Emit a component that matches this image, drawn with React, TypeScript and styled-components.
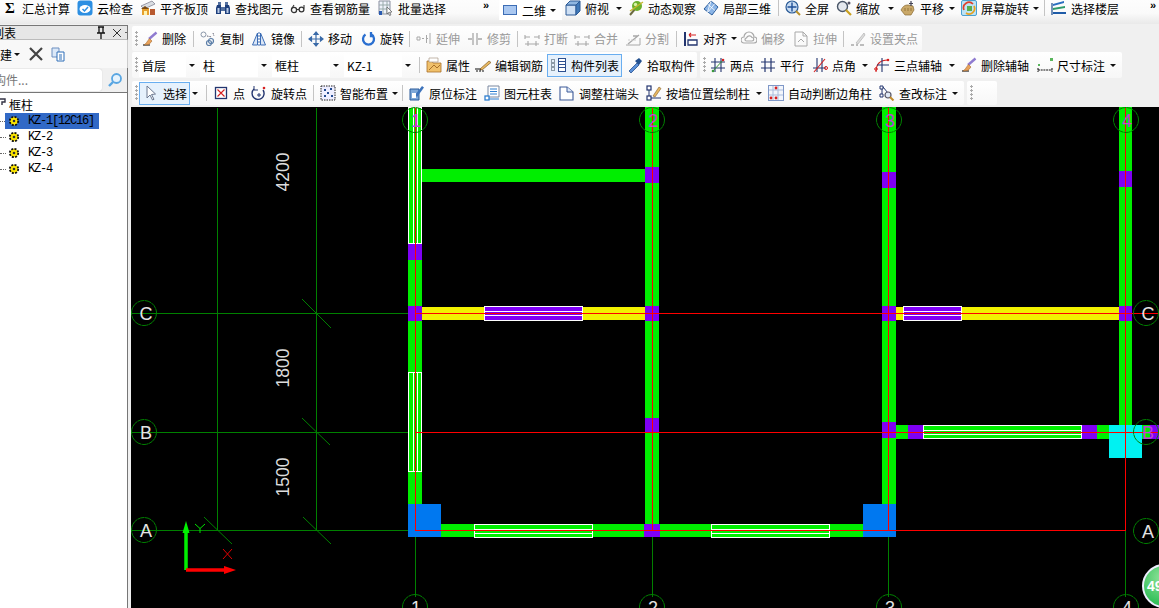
import React from "react";
import styled, { createGlobalStyle } from "styled-components";

const Global = createGlobalStyle`
  html, body { margin: 0; padding: 0; background: #f0f0f0; overflow: hidden; }
  body { font-family: "Noto Sans CJK SC", "Liberation Sans", sans-serif; font-size: 12px; color: #000; }
`;

const Page = styled.div`
  width: 1159px; height: 608px; overflow: hidden; display: flex; flex-direction: column; background: #f0f0f0;
`;
const TopBar = styled.div`
  height: 24px; padding: 0 0 8px 2px; box-sizing: border-box; display: flex; align-items: center;
  background: linear-gradient(#fdfdfd, #fafafa 55%, #e9e9e9);
`;
const Main = styled.div`display: flex; height: 584px;`;
const Panel = styled.div`width: 128px; flex: none; margin-right: 3px; padding-top: 1px; display: flex; flex-direction: column; overflow: hidden;`;
const PanelTitle = styled.div`
  flex: none; display: flex; align-items: center; background: #e6e6e6;
  border-top: 1px solid #777; border-right: 1px solid #777; border-bottom: 1px solid #bbb;
  height: 13px; overflow: hidden;
`;
const TitleText = styled.span`margin-left: -32px; white-space: nowrap; flex: 1; line-height: 13px;`;
const PanelBar = styled.div`height: 28px; flex: none; display: flex; align-items: center; background: #f8f8f8; overflow: hidden; border-right: 1px solid #ccc;`;
const NewText = styled.span`margin-left: -12px; white-space: nowrap;`;
const SearchRow = styled.div`height: 24px; flex: none; display: flex; align-items: center; background: #f0f0f0; border-bottom: 1px solid #777; border-right: 1px solid #777;`;
const SearchInput = styled.div`
  width: 102px; height: 22px; background: #fff; border-radius: 0 3px 3px 0; overflow: hidden; color: #777;
  line-height: 22px; white-space: nowrap; box-shadow: 0 0 1px #bbb;
`;
const SearchText = styled.span`margin-left: -6px; display: inline-block;`;
const Tree = styled.div`flex: 1; background: #fff; border-right: 1px solid #777; padding-top: 3px;`;
const TreeRow = styled.div<{ $h?: number }>`height: ${p => p.$h ?? 16}px; display: flex; align-items: center; white-space: nowrap;`;
const RootLabel = styled.span`margin-left: -7px; font-size: 12px; line-height: 16px;`;
const Dots = styled.span<{ $w: number }>`width: ${p => p.$w}px; border-top: 1px dotted #666; flex: none;`;
const Leaf = styled.span<{ $on?: boolean }>`
  display: flex; align-items: center; height: 16px; padding: ${p => (p.$on ? "0 5px 0 1px" : "0")};
  background: ${p => (p.$on ? "#3169c6" : "transparent")};
  font: 12px "Liberation Mono", monospace; letter-spacing: -1.2px; gap: 6px; color: #000;
`;

const Work = styled.div`flex: 1; display: flex; flex-direction: column; min-width: 0; padding-top: 2px;`;
const Row = styled.div<{ $h: number; $mb: number }>`
  height: ${p => p.$h}px; margin-bottom: ${p => p.$mb}px; padding-left: 1px; display: flex; gap: 3px; flex: none;
`;
const Group = styled.div<{ $w?: number }>`
  display: flex; align-items: center; height: 100%; border-radius: 2px;
  ${p => (p.$w ? `width: ${p.$w}px;` : "")}
  background: linear-gradient(#fff, #f7f7f7);
`;
const Grip = styled.span`
  width: 3px; height: 16px; margin: 0 1px 0 3px; flex: none;
  background: radial-gradient(circle at 1.5px 1.5px, #aaa 1.2px, transparent 1.4px) 0 0 / 3px 4px;
`;
const Sep = styled.span`width: 1px; height: 16px; margin: 0 6px; background: #c4c4c4; flex: none;`;
const Tool = styled.div<{ $w: number; $ml?: number; $muted?: boolean; $on?: boolean }>`
  width: ${p => p.$w}px; flex: none; display: flex; align-items: center; gap: 4px; white-space: nowrap;
  box-sizing: border-box; margin-left: ${p => p.$ml ?? 0}px;
  color: ${p => (p.$muted ? "#9a9a9a" : "#000")};
  ${p => p.$on ? `height: 23px; padding-left: 3px; border: 1px solid #69aef0; background: #e6f1fc;` : ""}
`;
const Caret = styled.span<{ $tight?: boolean; $solo?: boolean }>`
  width: 0; height: 0; border: 3.5px solid transparent; border-top: 3.5px solid #111; border-bottom: 0;
  margin-left: ${p => (p.$solo ? "1.5px" : "auto")}; margin-right: ${p => (p.$tight ? 1 : p.$solo ? 1.5 : 6)}px; flex: none;
`;
const SoloArrow = styled.div`width: 10px; display: flex; justify-content: center; flex: none;`;
const More = styled.span<{ $w: number }>`width: ${p => p.$w}px; flex: none; font: bold 11px "Liberation Sans", sans-serif; line-height: 10px; align-self: flex-start;`;
const ViewWrap = styled.div`display: flex; align-items: center; align-self: flex-start; background: #fff; height: 20px; box-sizing: border-box; padding-left: 3px; width: 63px; margin-right: 3px; flex: none;`;
const Sigma = styled.span`width: 16px; text-align: center; font: bold 15px "Liberation Serif", serif; flex: none;`;
const SelectBox = styled.div<{ $w: number; $mr: number }>`width: ${p => p.$w}px; height: 23px; display: flex; align-items: center; flex: none; margin-right: ${p => p.$mr}px;`;
const SelectField = styled.div`flex: 1; height: 100%; background: #fff; padding-left: 3px; display: flex; align-items: center;`;
const SelectArrow = styled.div`width: 11px; display: flex; justify-content: center; flex: none;`;
const CanvasArea = styled.div`position: relative; width: 1028px; height: 501px; background: #000; overflow: hidden; flex: none;`;
const Drawing = styled.svg`display: block;`;
const Badge = styled.div`
  position: absolute; left: 1011px; top: 457px; width: 44px; height: 44px; box-sizing: border-box; border-radius: 50%;
  border: 2px solid #eef; background: radial-gradient(circle at 45% 30%, #8fe39a, #35c05a 70%);
  color: #fff; font: bold 14px "Liberation Sans", sans-serif; line-height: 40px; padding-left: 3px;
`;
const Ico = styled.svg`width: 16px; height: 16px; flex: none; display: block;`;

const N = "#23356f", B = "#2f7fd0", G = "#a8a8a8", R = "#d62020";
const brush = <><path d="M1 14h7" stroke="#222" strokeWidth="1.2" /><path d="M14.5 1.5 7 8" stroke="#8f7bd0" strokeWidth="2.4" /><path d="M7.5 7.5 10 10l-3 3.4-5 .6c2-1 3-3.5 5.5-6.5z" fill="#e9a25a" stroke="#a56a30" strokeWidth=".6" /></>;
const ICONS: Record<string, React.ReactNode> = {
  cloud: <><rect x=".5" y=".5" width="15" height="15" rx="3" fill="#2d8fe2" /><ellipse cx="8" cy="9" rx="5.5" ry="4" fill="#fff" /><path d="m5.5 9 2 2 3.5-4" stroke="#2d8fe2" strokeWidth="1.5" fill="none" /></>,
  level: <><path d="m1 6 11-5 3 3L4 9z" fill="#d9dde2" stroke="#778" strokeWidth=".7" /><path d="M2 8h7v7H2z" fill="#e6a02e" /><path d="M1 9l4-3 4 3z" fill="#7a4a12" /><path d="M4 11h3v4H4z" fill="#fff3b0" /><path d="M10 9h5v6h-5z" fill="#b85a30" /></>,
  binoc: <><path d="M2 5h4v9H1V8zM10 5h4l1 3v6h-5z" fill="#1e3f7c" /><path d="M6 7h4v4H6zM3 2h3v3H3zM10 2h3v3h-3z" fill="#54709f" /><path d="M2.5 8h2v5h-2zM11.5 8h2v5h-2z" fill="#b9cbe6" /></>,
  glasses: <><circle cx="4" cy="10" r="2.6" fill="none" stroke="#333" strokeWidth="1.3" /><circle cx="11.5" cy="9.5" r="2.4" fill="none" stroke="#333" strokeWidth="1.3" /><path d="M6.5 9.5H9M1.5 9 4 5M14 8.5V5" stroke="#333" strokeWidth="1.1" fill="none" /></>,
  batch: <><path d="M1 1h11v13H1z" fill="#eef2fa" stroke="#8a8fa0" /><path d="M1 5h11M1 9h11M5 1v13M9 1v13" stroke="#9aa" /><path d="M1 11h3v4H1z" fill="#2a5ab0" /><path d="m9 7 5 5-2.5.2L13 15l-1.5.5-1-3L9 14z" fill="#fff" stroke="#444" strokeWidth=".6" /></>,
  view2d: <rect x="1.5" y="3.5" width="13" height="9" fill="#a9c7f0" stroke="#3c6db5" />,
  cube: <><path d="M1 5h10v10H1z" fill="#cfe0f4" stroke="#2c5a96" /><path d="m1 5 4-4h10l-4 4z" fill="#8fb6e0" stroke="#2c5a96" /><path d="m11 5 4-4v10l-4 4z" fill="#3f78b8" stroke="#2c5a96" /></>,
  orbit: <><path d="M2 15 7 9" stroke="#6b6b40" strokeWidth="2" /><circle cx="9" cy="6" r="5" fill="#6cb02c" /><circle cx="7.5" cy="4.5" r="1.7" fill="#d9f2a8" /><path d="M2 11 15 2" stroke="#c7b52e" strokeWidth="1.3" /></>,
  local3d: <><path d="m8 1 7 6-6 8-8-6z" fill="#8ab4e6" stroke="#2d5f9e" /><path d="m4.5 4 7.5 6.5M8 1 4.5 12M11.5 4 5 12" stroke="#fff" strokeWidth=".8" /></>,
  full: <><circle cx="7" cy="7" r="6" fill="#c8dcf2" stroke="#2a5a96" strokeWidth="1.2" /><path d="M7 2.5v9M2.5 7h9" stroke="#1f4f98" strokeWidth="1.4" /><path d="m11 11 4 4" stroke="#b8902c" strokeWidth="2" /></>,
  zoom: <><circle cx="6.5" cy="6.5" r="5" fill="#e4e8ee" stroke="#4a5668" strokeWidth="1.4" /><path d="m10 10 5 5" stroke="#c9a020" strokeWidth="2.2" /><circle cx="13" cy="3" r="1.5" fill="#556" /></>,
  pan: <><path d="M1 10c2-4 4-5 7-5l5 1 1 4-3 5H5z" fill="#c9a868" stroke="#8a6a30" strokeWidth=".7" /><path d="M11 1v5M9 3.5h4" stroke="#445" strokeWidth="1.2" /><path d="M5 8v3M8 8v3M11 8v3" stroke="#8a6a30" strokeWidth=".8" /></>,
  screen: <><rect x=".5" y=".5" width="15" height="15" rx="1.5" fill="#bde3f5" stroke="#4aa0d0" /><path d="M3 10a5.5 5.5 0 0 1 9-6" stroke="#e0402a" strokeWidth="1.7" fill="none" /><path d="M13 6a5.5 5.5 0 0 1-8 7" stroke="#e8a020" strokeWidth="1.7" fill="none" /><path d="M6 6h5v5H6z" fill="#58b050" /></>,
  floors: <><path d="M2 4 13 1v2L2 6z" fill="#2a6fc0" /><path d="m2 8 12-2v2L2 10z" fill="#2f9a6a" /><path d="M2 12h13v2H2z" fill="#1f5ca8" /><path d="M1 3v12" stroke="#1a4a8a" strokeWidth="1.2" /></>,
  erase: brush,
  copy: <><circle cx="3.5" cy="3.5" r="2.5" fill="none" stroke="#8a96a8" /><circle cx="9" cy="12" r="2.5" fill="none" stroke="#5b7ea8" strokeWidth="1.2" /><circle cx="11" cy="10" r="2.5" fill="none" stroke="#5b7ea8" strokeWidth="1.2" /><path d="m7 5 5 1M13 2l1 3" stroke="#667" strokeDasharray="1.5 1" /></>,
  mirror: <><path d="M6.5 2v12h-5zM9.5 2v12h5z" fill="#dbe6f6" stroke="#3c6db5" /><path d="M8 1v14" stroke="#3c6db5" strokeDasharray="2 1" /></>,
  move: <path d="M8 1v14M1 8h14M8 1 6 3.5h4zM8 15l-2-2.500h4zM1 8l2.5-2v4zM15 8l-2.500-2v4z" stroke="#3a6aa8" strokeWidth="1.2" fill="#3a6aa8" />,
  rotate: <path d="M11.5 3.5a5.5 5.5 0 1 1-6 0M11 1v4h3" stroke="#2a6fd0" strokeWidth="2.3" fill="none" />,
  extend: <path d="M1 6h3v3H1zM6 7.500h2M10 7.500h2M14 2v11M10.500 4v8" stroke={G} fill="none" />,
  trim: <path d="M6 2v12M10 2v12M1 8h4M11 8h4" stroke={G} strokeWidth="1.3" />,
  cut: <path d="M1 6h5M1 4v4M10 6h5M15 4v4M1 13h14M4 10v5M12 10v5" stroke={G} strokeWidth="1.1" fill="none" />,
  split: <><path d="M1 14h14V7" stroke={G} fill="none" /><path d="M3 13 14 4M8 5h5" stroke={G} strokeWidth="1.3" /><path d="M3 9h9" stroke="#ccc" strokeDasharray="2 1" /></>,
  align: <><path d="M2 1v14" stroke={N} strokeWidth="2" /><path d="M5 9h9v5H5z" fill="#fff" stroke={N} strokeWidth="1.3" /><path d="M13 4H6m0 0 2-2m-2 2 2 2" stroke={R} strokeWidth="1.1" fill="none" /></>,
  offset: <path d="M3 12a3 3 0 0 1 0-6 5 5 0 0 1 10 0 3 3 0 0 1 0 6zM5.500 10a1.500 1.500 0 0 1 0-3 3 3 0 0 1 5.500-.500 1.700 1.700 0 0 1 0 3.500z" fill="none" stroke={G} strokeWidth="1.2" />,
  stretch: <path d="M2 1h8l4 4v10H2zM10 1v4h4M5 11l3-3 3 3" fill="none" stroke={G} />,
  grip: <><path d="M1 14h3M6 14h2M10 14h4" stroke={G} strokeWidth="1.5" /><path d="m6 12 8-10 1 2-7 9z" fill="#ddd" stroke={G} strokeWidth=".6" /></>,
  props: <><path d="M1 4h5l1 2h8v9H1z" fill="#f0c06a" stroke="#a8702a" strokeWidth=".8" /><path d="M3 1h9v4H3z" fill="#fff" stroke="#a98" strokeWidth=".7" /><path d="m3 13 5-5 3 3 3-3" stroke="#a8702a" fill="none" /></>,
  rebar: <><path d="M0 12h6M5 13l1.5-1" stroke="#111" strokeWidth="1.1" /><path d="m5 12 9-8 2 1.500-9 7.500z" fill="#e8b860" stroke="#85602a" strokeWidth=".7" /><path d="M1 14h9" stroke="#111" strokeDasharray="2 1" /></>,
  list: <><rect x=".5" y="2.5" width="3" height="3" fill="none" stroke="#345" strokeDasharray="1 1" /><rect x=".5" y="6.5" width="3" height="3" fill="none" stroke="#345" strokeDasharray="1 1" /><rect x=".5" y="10.5" width="3" height="3" fill="none" stroke="#345" strokeDasharray="1 1" /><rect x="7.5" y="1.5" width="7" height="13" fill="#fff" stroke="#2c4f8f" /><path d="M8 4.500h6M8 7.500h6M8 10.500h6" stroke="#2c4f8f" /></>,
  pick: <><path d="m2 14 8-8 2 2-8 8z" fill="#5a90d8" stroke="#26508f" strokeWidth=".8" /><path d="m8 4 4-3 3 3-3 4z" fill="#23508f" /></>,
  two: <><path d="M1 5h14M1 11h14M5 1v14M11 1v14" stroke={N} strokeWidth="1.1" /><path d="M3 14 14 2" stroke="#3b9a3b" /><circle cx="13" cy="3" r="1.3" fill={R} /><circle cx="3" cy="14" r="1.3" fill="#3b9a3b" /></>,
  para: <path d="M1 5h14M1 11h14M5 1v14M11 1v14" stroke={N} strokeWidth="1.2" />,
  angle: <><path d="M1 11h13M5 1v14M10 1v14" stroke={N} strokeWidth="1.1" /><path d="M2 15 13 2" stroke={R} strokeWidth="1.1" /><circle cx="14" cy="11" r="1.5" fill="none" stroke={R} /></>,
  three: <><path d="M2 15C2 7 6 3 14 3" stroke={R} strokeWidth="1.1" fill="none" /><path d="M8 1v14M3 8h12" stroke={N} strokeWidth="1.1" /><circle cx="2" cy="12" r="1.3" fill="none" stroke={R} /><circle cx="14" cy="3" r="1.3" fill={R} /></>,
  dim: <><rect x="13" y="1" width="3" height="3" fill="#59b65c" /><rect x="1" y="7" width="2" height="2" fill="#59b65c" /><path d="M1 11v4M15 11v4M1 13h14" stroke="#111" strokeDasharray="2 .7" /></>,
  cursor: <path d="m4 1 0 12 3-3 2.5 5 1.5-.7L8.500 9.500l4-.500z" fill="#fff" stroke="#6c7890" />,
  point: <><rect x="2.5" y="2.5" width="11" height="11" fill="#fff" stroke={N} strokeWidth="1.3" /><path d="m4.5 4.500 7 7m0-7-7 7" stroke={R} strokeWidth="1.1" /></>,
  rotp: <><path d="M3 4a6 6 0 1 0 9 1" stroke={N} strokeWidth="1.4" fill="none" /><path d="M3 1v4h4" stroke={N} fill="none" /><path d="M8 8v4M6 10h4" stroke={N} /><circle cx="13" cy="3" r="1.3" fill={R} /></>,
  smart: <><rect x="1" y="1" width="14" height="14" fill="#eef" stroke="#222" strokeDasharray="1.5 1" /><path d="M4 5h2M10 4h2M7 8h2M4 11h2M11 11h2" stroke="#224a90" strokeWidth="1.8" /></>,
  orig: <><path d="M1 4h9v11H1z" fill="#7fa8d8" stroke="#2a5a9a" /><path d="m6 10 7-9 2 1.500L8 12z" fill="#3d73bb" /><path d="M3 8h4v5H3z" fill="#fff" /></>,
  table: <><path d="M4 1h11v11H4z" fill="#fff" stroke="#7a88a0" /><path d="M6 4h7M6 6.500h7M6 9h7" stroke={B} /><rect x="1" y="11" width="4" height="4" fill="#fff" stroke={B} strokeWidth="1.3" /><path d="M5 14h10" stroke={B} /></>,
  adj: <><path d="M1 15V2h7l6 5v8z" fill="#fff" stroke="#3d5a98" strokeWidth="1.1" /><path d="M8 2v5h6" fill="#dde8f8" stroke="#3d5a98" /></>,
  wall: <><rect x="1" y="1" width="4" height="4" fill="#fff" stroke={N} strokeWidth="1.2" /><rect x="1" y="11" width="4" height="4" fill="#fff" stroke={N} strokeWidth="1.2" /><path d="M3 5v6M5 13h10" stroke={N} /><path d="m7 11 6-9 2 1.500-6 8.500z" fill="#e8b860" stroke="#85602a" strokeWidth=".6" /></>,
  auto: <><rect x=".5" y=".5" width="15" height="15" fill="#f3f6fc" stroke="#7f98c8" /><path d="M5 1v14M10 1v14M1 5h14M1 10h14" stroke="#a9bcdc" /><circle cx="8" cy="3" r="1.4" fill={R} /><circle cx="3" cy="13" r="1.4" fill={R} /><circle cx="8" cy="13" r="1.4" fill={R} /></>,
  check: <><path d="M1 1h3v3H1zM1 9h3v3H1z" fill="#fff" stroke={N} /><path d="M3 4v5M4 2l5 6" stroke={N} /><circle cx="9" cy="10" r="3" fill="#dfe8f6" stroke="#556" strokeWidth="1.2" /><path d="m11 12 3.500 3.500" stroke="#c08a2a" strokeWidth="2" /></>,
  search: <><circle cx="9.5" cy="6.5" r="4.5" fill="#e6f3fd" stroke="#59a6e2" strokeWidth="1.8" /><path d="M6 10 2 14" stroke="#59a6e2" strokeWidth="2.4" /></>,
  pin: <path d="M5 2h6M6 2v6h4V2M4 8h8M8 8v6" stroke="#111" strokeWidth="1.3" fill="none" />,
  close: <path d="m4 4 8 8m0-8-8 8" stroke="#333" strokeWidth="1" />,
  del: <path d="m2 2 12 12m0-12L2 14" stroke="#444" strokeWidth="2.2" />,
  paste: <><path d="M2 2h7v9H2z" fill="#dbe8f8" stroke="#6c8fc0" /><path d="M7 6h7v9H7z" fill="#fff" stroke="#2f6fb8" /><path d="M9 9h3M9 11h3M9 13h3" stroke="#2f6fb8" /></>,
  gear: <><circle cx="8" cy="8" r="4.2" fill="#ffe800" stroke="#111" strokeWidth="1.8" strokeDasharray="2 1.3" /><circle cx="8" cy="8" r="1.3" fill="#333" /></>,
  tree: <path d="M0 2h5v3H2v3" stroke="#334" strokeWidth="1.4" fill="none" />,
};
const Icon = ({ n }: { n: string }) => <Ico viewBox="0 0 16 16">{ICONS[n]}</Ico>;

type T = { i: string; t: string; w: number; a?: boolean; tight?: boolean; m?: boolean; ml?: number; on?: boolean } | "sep";
const Tools = ({ items }: { items: T[] }) => (
  <>
    {items.map((x, k) =>
      x === "sep" ? <Sep key={k} /> : (
        <Tool key={k} $w={x.w} $muted={x.m} $ml={x.ml} $on={x.on}>
          <Icon n={x.i} />
          <span>{x.t}</span>
          {x.a && <Caret $tight={x.tight} />}
        </Tool>
      )
    )}
  </>
);

const topA: T[] = [
  { i: "cloud", t: "云检查", w: 63 }, { i: "level", t: "平齐板顶", w: 75 }, { i: "binoc", t: "查找图元", w: 75 },
  { i: "glasses", t: "查看钢筋量", w: 88 }, { i: "batch", t: "批量选择", w: 105 },
];
const topB: T[] = [
  { i: "cube", t: "俯视", w: 63, a: true }, { i: "orbit", t: "动态观察", w: 75 }, { i: "local3d", t: "局部三维", w: 69 }, "sep",
  { i: "full", t: "全屏", w: 51 }, { i: "zoom", t: "缩放", w: 64, a: true }, { i: "pan", t: "平移", w: 61, a: true },
  { i: "screen", t: "屏幕旋转", w: 77, a: true, tight: true }, "sep", { i: "floors", t: "选择楼层", w: 99 },
];
const row2: T[] = [
  { i: "erase", t: "删除", w: 45, ml: 3 }, "sep", { i: "copy", t: "复制", w: 51 }, { i: "mirror", t: "镜像", w: 44 }, "sep",
  { i: "move", t: "移动", w: 52 }, { i: "rotate", t: "旋转", w: 43 }, "sep",
  { i: "extend", t: "延伸", w: 51, m: true }, { i: "trim", t: "修剪", w: 44, m: true }, "sep",
  { i: "cut", t: "打断", w: 50, m: true }, { i: "cut", t: "合并", w: 51, m: true }, { i: "split", t: "分割", w: 45, m: true }, "sep",
  { i: "align", t: "对齐", w: 58, a: true }, { i: "offset", t: "偏移", w: 52, m: true }, { i: "stretch", t: "拉伸", w: 44, m: true }, "sep",
  { i: "grip", t: "设置夹点", w: 72, m: true },
];
const row3a: T[] = [
  { i: "props", t: "属性", w: 49 }, { i: "rebar", t: "编辑钢筋", w: 72 }, { i: "list", t: "构件列表", w: 75, on: true },
  { i: "pick", t: "拾取构件", w: 70, ml: 5 },
];
const row3b: T[] = [
  { i: "two", t: "两点", w: 50, ml: 3 }, { i: "para", t: "平行", w: 52 }, { i: "angle", t: "点角", w: 62, a: true },
  { i: "three", t: "三点辅轴", w: 87, a: true }, { i: "erase", t: "删除辅轴", w: 76 }, { i: "dim", t: "尺寸标注", w: 85, a: true },
];
const row4a: T[] = [
  { i: "point", t: "点", w: 38 }, { i: "rotp", t: "旋转点", w: 56 }, "sep", { i: "smart", t: "智能布置", w: 76, a: true, tight: true }, "sep",
  { i: "orig", t: "原位标注", w: 75 }, { i: "table", t: "图元柱表", w: 75 }, { i: "adj", t: "调整柱端头", w: 87 },
  { i: "wall", t: "按墙位置绘制柱", w: 122, a: true }, { i: "auto", t: "自动判断边角柱", w: 111 }, { i: "check", t: "查改标注", w: 85, a: true },
];

const Select = ({ w, t, mr = 3 }: { w: number; t: string; mr?: number }) => (
  <SelectBox $w={w} $mr={mr}>
    <SelectField>{t}</SelectField>
    <SelectArrow><Caret $solo /></SelectArrow>
  </SelectBox>
);

const GREEN = "#00ee00", PURPLE = "#7f00f5", YELLOW = "#f2f200", BLUE = "#0078f0", CYAN = "#00f2f2", RED = "#ff0000", GRID = "#008000";
type Rc = [number, number, number, number, string];
const blocks: Rc[] = [
  [408, 107, 14, 397, GREEN], [645, 107, 14, 430, GREEN], [882, 107, 14, 397, GREEN], [1119, 107, 13, 318, GREEN],
  [422, 169, 223, 13, GREEN], [422, 307, 223, 13, YELLOW], [896, 307, 223, 13, YELLOW],
  [441, 524, 423, 13, GREEN], [896, 425, 213, 14, GREEN], [1142, 425, 8, 14, GREEN], [1150, 425, 9, 14, PURPLE],
  [408, 244, 14, 16, PURPLE], [408, 306, 14, 15, PURPLE], [645, 167, 14, 16, PURPLE], [645, 306, 14, 15, PURPLE], [645, 418, 14, 15, PURPLE], [644, 524, 16, 13, PURPLE],
  [882, 172, 14, 16, PURPLE], [882, 306, 14, 15, PURPLE], [882, 422, 14, 16, PURPLE], [1119, 171, 13, 16, PURPLE], [1119, 306, 13, 15, PURPLE],
  [908, 425, 15, 14, PURPLE], [1082, 425, 15, 14, PURPLE],
  [408, 504, 33, 33, BLUE], [863, 504, 33, 33, BLUE], [1109, 425, 33, 33, CYAN],
];
const openings: [number, number, number, number, string, boolean][] = [
  [408, 107, 14, 137, GREEN, true], [408, 372, 14, 100, GREEN, true],
  [484, 306, 99, 15, PURPLE, false], [903, 306, 59, 15, PURPLE, false],
  [474, 524, 119, 14, GREEN, false], [711, 524, 119, 14, GREEN, false], [923, 425, 159, 14, GREEN, false],
];
const Line = ({ x1, y1, x2, y2, c }: { x1: number; y1: number; x2: number; y2: number; c: string }) => (
  <line x1={x1 + 0.5} y1={y1 + 0.5} x2={x2 + 0.5} y2={y2 + 0.5} stroke={c} strokeWidth={1} />
);
const Bubble = ({ x, y, t, c, dx = 1 }: { x: number; y: number; t: string; c: string; dx?: number }) => (
  <g>
    <circle cx={x} cy={y} r={12.5} fill="none" stroke={GRID} strokeWidth={1} strokeDasharray="7 .4" />
    <text x={x + dx} y={y + 6.5} fontSize={18} textAnchor="middle" fill={c} fontFamily='"Liberation Sans", sans-serif'>{t}</text>
  </g>
);
const Dim = ({ y, t }: { y: number; t: string }) => (
  <text transform={`translate(289 ${y}) rotate(-90)`} fontSize={17.5} textAnchor="middle" fill="#dcdcdc" fontFamily='"Liberation Sans", sans-serif'>{t}</text>
);

const Plan = () => (
  <Drawing width={1028} height={501} viewBox="131 107 1028 501">
    <g shapeRendering="crispEdges">
      {[217, 316].map(x => <Line key={x} x1={x} y1={107} x2={x} y2={530} c={GRID} />)}
      {[415, 652, 888, 1125].map(x => <Line key={x} x1={x} y1={530} x2={x} y2={596} c={GRID} />)}
      {[313, 432, 530].map(y => <Line key={y} x1={131} y1={y} x2={415} y2={y} c={GRID} />)}
      {blocks.map(([x, y, w, h, c], k) => <rect key={k} x={x} y={y} width={w} height={h} fill={c} />)}
      {openings.map(([x, y, w, h, c, v], k) => (
        <g key={k}>
          <rect x={x + 0.5} y={y + 0.5} width={w - 1} height={h - 1} fill={c} stroke="#fff" />
          {v
            ? <><Line x1={x + 5} y1={y} x2={x + 5} y2={y + h - 1} c="#fff" /><Line x1={x + 9} y1={y} x2={x + 9} y2={y + h - 1} c="#fff" /></>
            : <><Line x1={x} y1={y + 5} x2={x + w - 1} y2={y + 5} c="#fff" /><Line x1={x} y1={y + 9} x2={x + w - 1} y2={y + 9} c="#fff" /></>}
        </g>
      ))}
      {[415, 652, 888, 1125].map(x => <Line key={x} x1={x} y1={107} x2={x} y2={530} c={RED} />)}
      <Line x1={415} y1={313} x2={1159} y2={313} c={RED} />
      <Line x1={415} y1={432} x2={1159} y2={432} c={RED} />
      <Line x1={415} y1={530} x2={1125} y2={530} c={RED} />
    </g>
    <path d="M302 299 331 328M302 418 330 445M204 517 232 544M303 517 331 544" stroke={GRID} strokeWidth={1} />
    <Dim y={172} t="4200" />
    <Dim y={368} t="1800" />
    <Dim y={477} t="1500" />
    {["1", "2", "3", "4"].map((t, k) => <Bubble key={t} x={[415, 652, 889, 1126][k]} y={120} t={t} c="#c040d8" />)}
    {["1", "2", "3", "4"].map((t, k) => <Bubble key={t} x={[415, 652, 889, 1126][k]} y={607} t={t} c="#e4e4e4" />)}
    <Bubble x={144} y={313} t="C" c="#e4e4e4" dx={2} />
    <Bubble x={144} y={432} t="B" c="#e4e4e4" dx={2} />
    <Bubble x={144} y={530} t="A" c="#e4e4e4" dx={2} />
    <Bubble x={1146} y={313} t="C" c="#e4e4e4" dx={2} />
    <Bubble x={1146} y={432} t="B" c="#c040d8" dx={2} />
    <Bubble x={1146} y={531} t="A" c="#e4e4e4" dx={2} />
    <path d="M186 570V531" stroke="#00f000" strokeWidth={3.5} />
    <path d="m186 521 3.5 12h-7z" fill="#00f000" />
    <path d="M186 570h40" stroke="#ff0000" strokeWidth={3.5} />
    <path d="m236 570-12-4v8z" fill="#ff0000" />
    <path d="M195 524 200 528.5 205 524M200 528.5V533" stroke="#00e000" fill="none" />
    <path d="m223 549 9 10m0-10-9 10" stroke="#e00000" fill="none" />
  </Drawing>
);

export default function App() {
  return (
    <Page>
      <Global />
      <TopBar>
        <Tool $w={75}><Sigma>Σ</Sigma><span>汇总计算</span></Tool>
        <Tools items={topA} />
        <More $w={16}>»</More>
        <ViewWrap><Tool $w={60}><Icon n="view2d" /><span>二维</span><Caret /></Tool></ViewWrap>
        <Tools items={topB} />
        <More $w={9}>»</More>
      </TopBar>
      <Main>
        <Panel>
          <PanelTitle>
            <TitleText>构件列表</TitleText>
            <Icon n="pin" />
            <Icon n="close" />
            <Dots $w={2} />
          </PanelTitle>
          <PanelBar>
            <NewText>新建</NewText>
            <Caret $solo />
            <Tool $w={16} $ml={7}><Icon n="del" /></Tool>
            <Tool $w={16} $ml={6}><Icon n="paste" /></Tool>
          </PanelBar>
          <SearchRow>
            <SearchInput><SearchText>构件...</SearchText></SearchInput>
            <Tool $w={16} $ml={5}><Icon n="search" /></Tool>
          </SearchRow>
          <Tree>
            <TreeRow $h={17}><Icon n="tree" /><RootLabel>框柱</RootLabel></TreeRow>
            <TreeRow><Dots $w={5} /><Leaf $on><Icon n="gear" />KZ-1[12C16]</Leaf></TreeRow>
            {["KZ-2", "KZ-3", "KZ-4"].map(t => (
              <TreeRow key={t}><Dots $w={6} /><Leaf><Icon n="gear" />{t}</Leaf></TreeRow>
            ))}
          </Tree>
        </Panel>
        <Work>
          <Row $h={25} $mb={1}>
            <Group><Grip /><Tools items={row2} /></Group>
          </Row>
          <Row $h={26} $mb={3}>
            <Group>
              <Grip />
              <Select w={58} t="首层" />
              <Select w={69} t="柱" />
              <Select w={69} t="框柱" />
              <Select w={69} t="KZ-1" mr={0} />
              <Sep />
              <Tools items={row3a} />
            </Group>
            <Group><Grip /><Tools items={row3b} /></Group>
          </Row>
          <Row $h={24} $mb={2}>
            <Group>
              <Grip />
              <Tool $w={51} $on><Icon n="cursor" /><span>选择</span></Tool>
              <SoloArrow><Caret $solo /></SoloArrow>
              <Sep />
              <Tools items={row4a} />
            </Group>
            <Group $w={30}><Grip /></Group>
          </Row>
          <CanvasArea>
            <Plan />
            <Badge>49</Badge>
          </CanvasArea>
        </Work>
      </Main>
    </Page>
  );
}
